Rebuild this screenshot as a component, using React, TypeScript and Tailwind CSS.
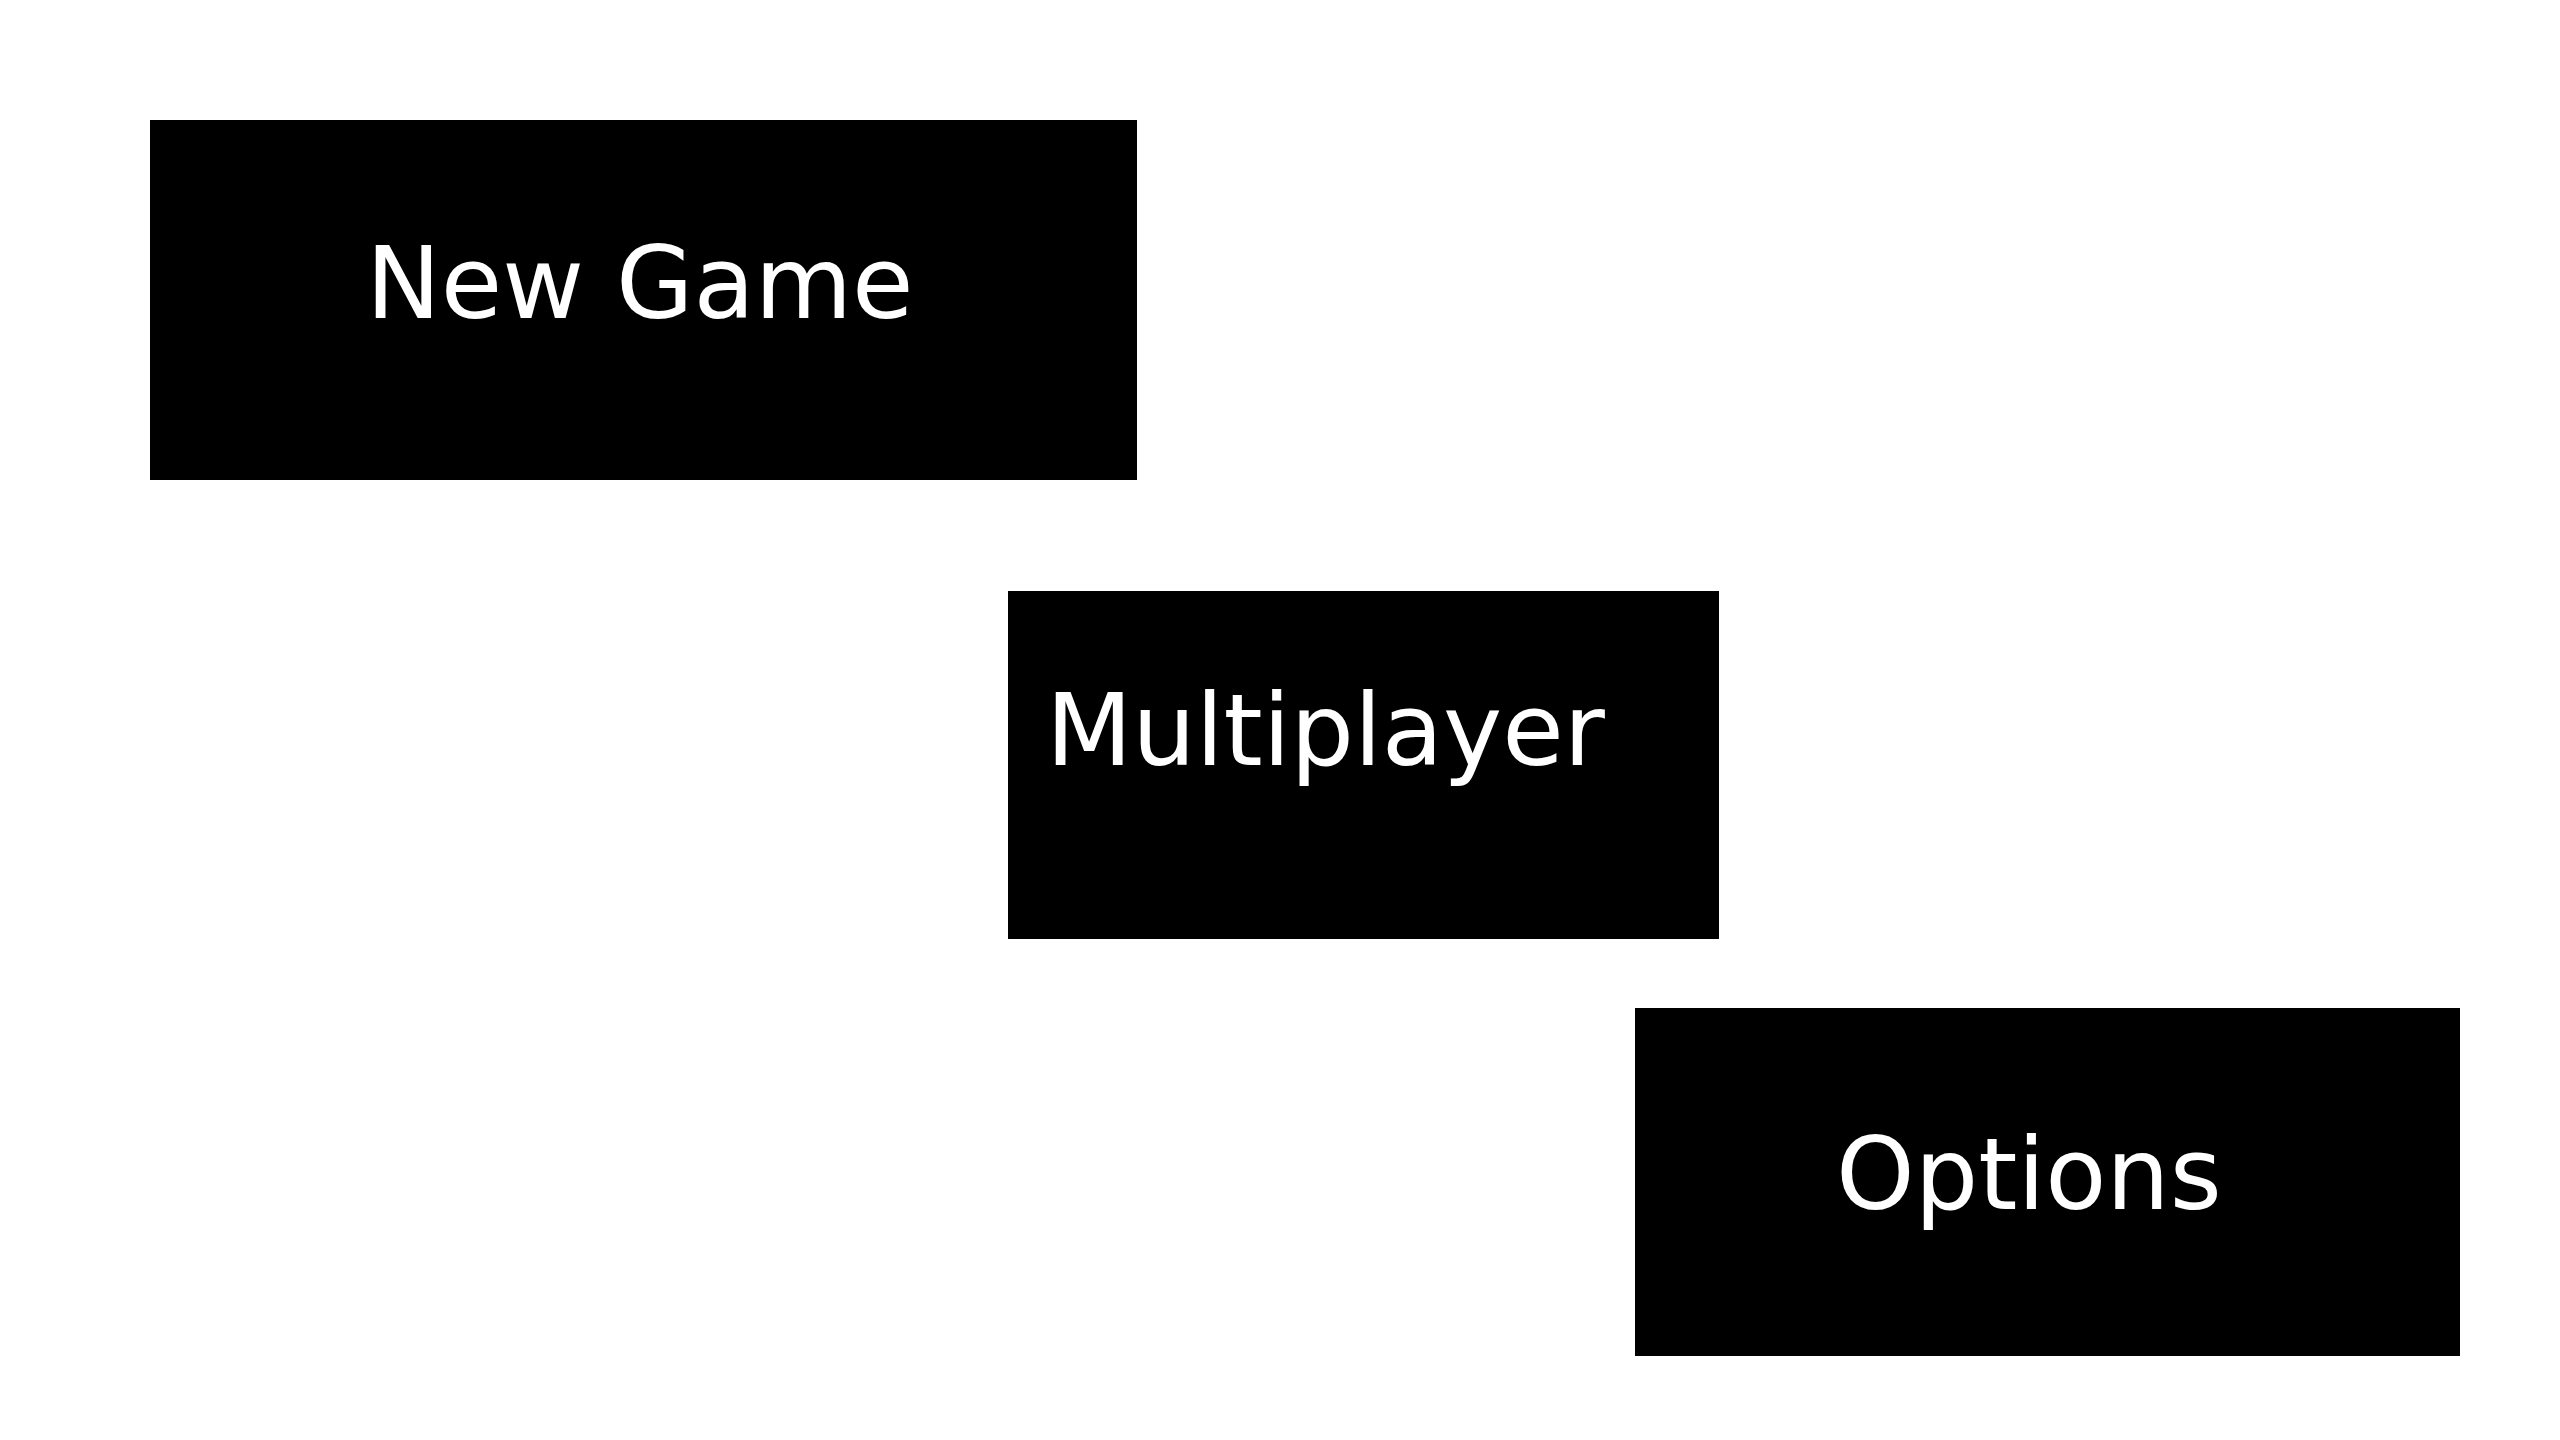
const buttonStyle =
  "cursor-pointer bg-black text-left text-[100px] leading-[100px] whitespace-nowrap text-white";

export default function App() {
  return (
    <main className="grid min-h-screen w-full grid-cols-[150fr_858fr_129fr_498fr_84fr_741fr_100fr] content-start bg-white pt-[120px] pb-[84px] font-['DejaVu_Sans',sans-serif]">
      <button
        type="button"
        className={`${buttonStyle} col-start-2 col-end-4 pt-[114px] pb-[146px] pl-[216px]`}
      >
        New Game
      </button>
      <button
        type="button"
        className={`${buttonStyle} col-start-3 col-end-6 mt-[111px] pt-[90px] pb-[158px] pl-[38px]`}
      >
        Multiplayer
      </button>
      <button
        type="button"
        className={`${buttonStyle} col-start-5 col-end-7 mt-[69px] pt-[117px] pb-[131px] pl-[201px]`}
      >
        Options
      </button>
    </main>
  );
}
